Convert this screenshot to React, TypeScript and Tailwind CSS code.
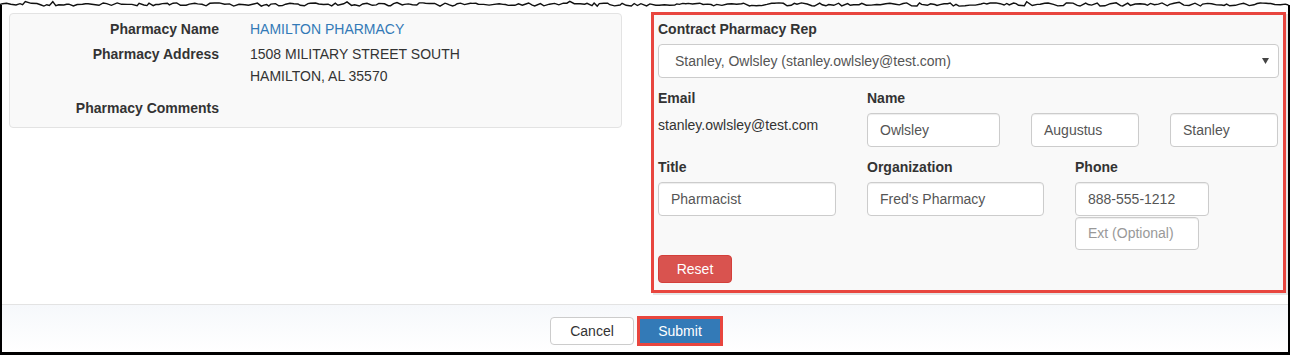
import React from "react";

function tornPath(): string {
  let seed = 7;
  const rnd = () => {
    seed = (seed * 9301 + 49297) % 233280;
    return seed / 233280;
  };
  const pts: string[] = [];
  let x = 0;
  while (x <= 1291) {
    const y = 4.5 + (rnd() - 0.5) * 3.2 + (rnd() > 0.9 ? -1.5 : 0);
    pts.push(`${x.toFixed(1)},${y.toFixed(1)}`);
    x += 2 + rnd() * 4;
  }
  return "M" + pts.join(" L");
}

const inputCls =
  "h-[34px] bg-white border border-[#cccccc] rounded-[4px] px-[12px] flex items-center text-[14px] text-[#555555] shadow-[inset_0_1px_1px_rgba(0,0,0,0.075)]";

export default function App() {
  const d = tornPath();
  return (
    <div className="relative w-[1291px] h-[356px] bg-white overflow-hidden font-['Liberation_Sans',Arial,sans-serif] text-[14px] text-[#333333]">
      {/* torn top edge */}
      <svg className="absolute left-0 top-0" width="1291" height="10" viewBox="0 0 1291 10">
        <path d={d + " L1291,0 L0,0 Z"} fill="#ffffff" />
        <path d={d} fill="none" stroke="#111111" strokeWidth="1.4" />
      </svg>

      <div className="mt-[5px] w-[1290px] h-[350px] border-l-2 border-r-2 border-b-[3px] border-black flex flex-col">
        {/* main area */}
        <div className="h-[299px] flex items-start pl-[7px]">
          {/* left well */}
          <div className="mt-[8px] w-[613px] h-[115px] bg-[#f9f9f9] border border-[#e3e3e3] rounded-[4px] pt-[5px]">
            <div className="flex leading-[20px]">
              <div className="w-[209px] text-right font-bold">Pharmacy Name</div>
              <div className="ml-[31px] text-[#337ab7]">HAMILTON PHARMACY</div>
            </div>
            <div className="flex leading-[22px] mt-[4px]">
              <div className="w-[209px] text-right font-bold">Pharmacy Address</div>
              <div className="ml-[31px]">
                <div>1508 MILITARY STREET SOUTH</div>
                <div>HAMILTON, AL 35570</div>
              </div>
            </div>
            <div className="flex leading-[20px] mt-[11px]">
              <div className="w-[209px] text-right font-bold">Pharmacy Comments</div>
            </div>
          </div>

          {/* right highlighted well */}
          <div className="ml-[29px] mt-[7px] w-[635px] h-[281px] border-[3px] border-[#e8463f] bg-[#f9f9f9] shadow-[2px_2px_0_#e6e6e6] px-[4px] pt-[4px]">
            <div className="font-bold leading-[20px]">Contract Pharmacy Rep</div>
            <div className="mt-[5px] h-[34px] w-[621px] bg-white border border-[#cccccc] rounded-[4px] flex items-center justify-between pl-[16px] pr-[8px] text-[#555555]">
              <span>Stanley, Owlsley (stanley.owlsley@test.com)</span>
              <svg width="7" height="6" viewBox="0 0 7 6" className="mr-[1px]">
                <path d="M0,0 L7,0 L3.5,6 Z" fill="#444444" />
              </svg>
            </div>

            <div className="flex mt-[10px]">
              <div className="w-[209px]">
                <div className="font-bold leading-[20px]">Email</div>
                <div className="mt-[7px] leading-[20px]">stanley.owlsley@test.com</div>
              </div>
              <div>
                <div className="font-bold leading-[20px]">Name</div>
                <div className="mt-[5px] flex gap-[31px]">
                  <div className={`${inputCls} w-[133px]`}>Owlsley</div>
                  <div className={`${inputCls} w-[108px]`}>Augustus</div>
                  <div className={`${inputCls} w-[108px]`}>Stanley</div>
                </div>
              </div>
            </div>

            <div className="flex mt-[10px]">
              <div className="w-[209px]">
                <div className="font-bold leading-[20px]">Title</div>
                <div className={`${inputCls} mt-[5px] w-[178px]`}>Pharmacist</div>
              </div>
              <div className="w-[208px]">
                <div className="font-bold leading-[20px]">Organization</div>
                <div className={`${inputCls} mt-[5px] w-[177px]`}>Fred's Pharmacy</div>
              </div>
              <div>
                <div className="font-bold leading-[20px]">Phone</div>
                <div className={`${inputCls} mt-[5px] w-[134px]`}>888-555-1212</div>
                <div className={`${inputCls} !h-[33px] mt-[1px] w-[124px] text-[#999999]`}>Ext (Optional)</div>
              </div>
            </div>

            <div className="mt-[5px] w-[74px] h-[28px] rounded-[4px] bg-[#d9534f] border border-[#d43f3a] text-white flex items-center justify-center">
              Reset
            </div>
          </div>
        </div>

        {/* footer */}
        <div className="flex-1 border-t border-[#e3e3e3] bg-gradient-to-b from-[#f6f8fb] to-white flex items-start justify-center pr-[17px] pt-[12px]">
          <div className="w-[84px] h-[28px] bg-white border border-[#cccccc] rounded-[4px] flex items-center justify-center text-[#333333]">
            Cancel
          </div>
          <div className="ml-[3px] -mt-[1px] border-[3px] border-[#e8463f] p-0">
            <div className="w-[80px] h-[24px] bg-[#337ab7] text-white flex items-center justify-center">
              Submit
            </div>
          </div>
        </div>
      </div>
    </div>
  );
}
